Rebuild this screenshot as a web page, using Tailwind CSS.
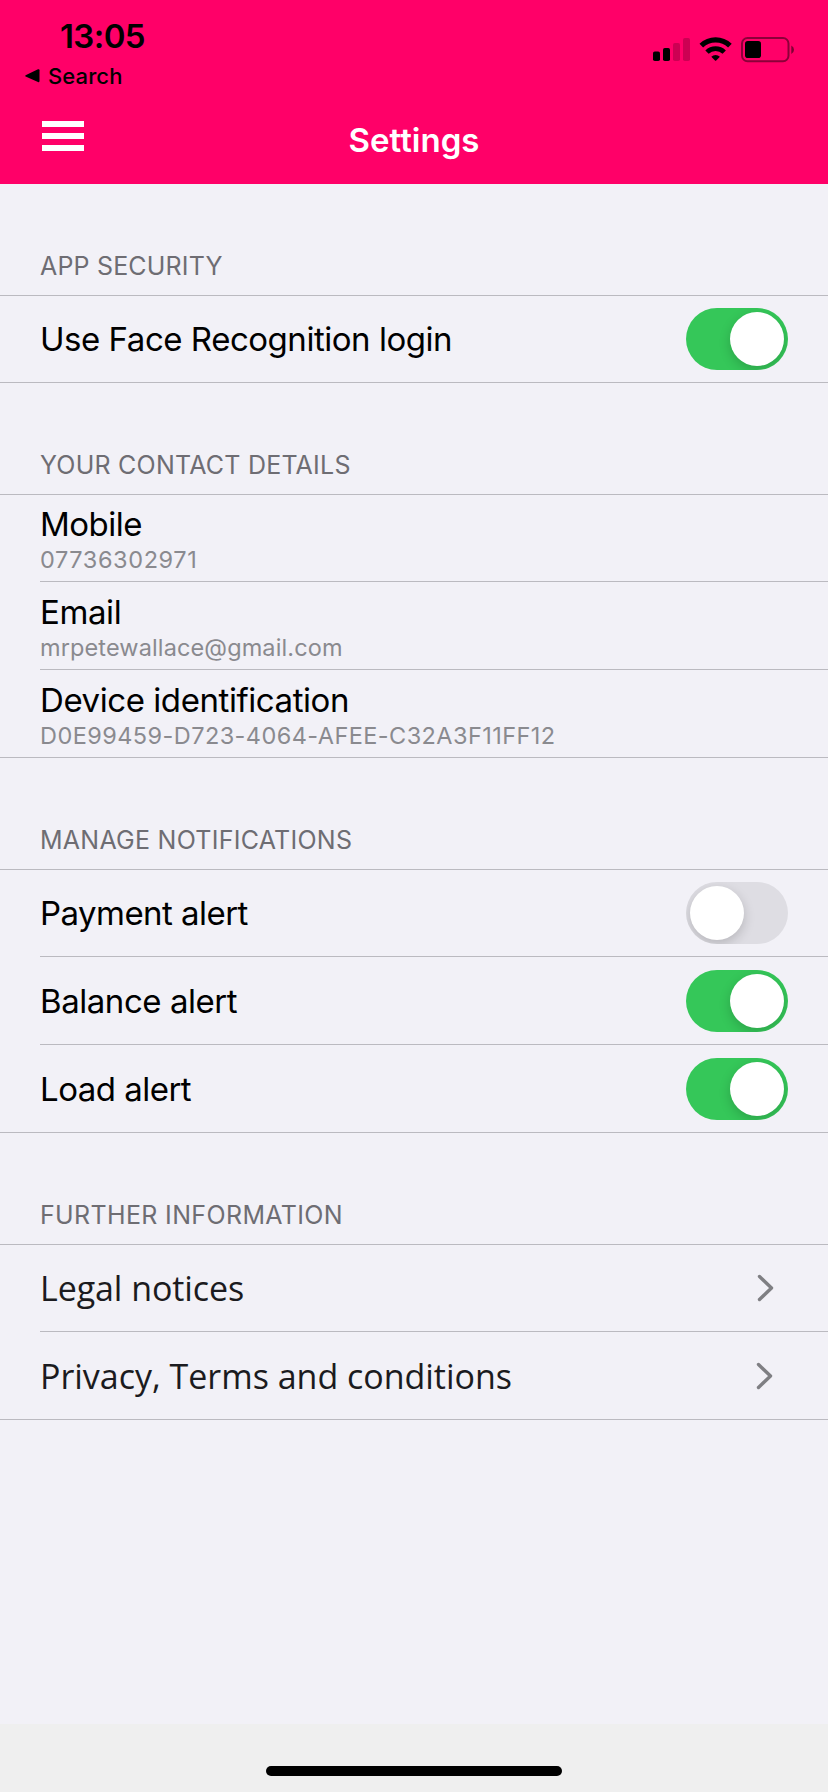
<!DOCTYPE html>
<html lang="en">
<head>
<meta charset="utf-8">
<title>Settings</title>
<script src="https://cdn.jsdelivr.net/npm/@tailwindcss/browser@4"></script>
</head>
<body class="flex h-[1792px] w-[828px] flex-col overflow-hidden bg-[#f2f1f7] font-['Inter',sans-serif] text-black">

<header class="h-[184px] shrink-0 bg-[#ff0068]">
  <div class="flex h-[92px] justify-between">
    <div class="flex flex-col pt-[16px]">
      <div class="pl-[60px] text-[33px] leading-[40px] font-semibold tracking-[-0.6px]">13:05</div>
      <div class="mt-[7px] flex items-center pl-[24px]">
        <svg class="h-[16px] w-[16px]" viewBox="0 0 16 16"><path d="M1.600 7.200 14 1.300Q15.500 .8 15.500 2.300V13.100Q15.500 14.600 14 14L1.600 8.600Q.6 7.900 1.600 7.200Z"/></svg>
        <span class="pl-[8px] text-[22px] leading-[26px] font-medium tracking-[0.1px]">Search</span>
      </div>
    </div>
    <svg class="mt-[30px] mr-[28px] h-[40px] w-[150px]" viewBox="650 30 150 40">
      <rect x="653" y="51.500" width="7" height="9.500" rx="1.800"/>
      <rect x="663" y="48" width="7" height="13" rx="1.800"/>
      <rect x="673" y="43" width="7" height="18" rx="1.800" fill-opacity=".2"/>
      <rect x="683" y="38" width="7" height="23" rx="1.800" fill-opacity=".2"/>
      <g fill="none" stroke="#000" stroke-width="5.200">
        <path d="M701.300 45.600A20.500 20.500 0 0 1 729.900 45.600"/>
        <path d="M707 52.100A12.300 12.300 0 0 1 724.200 52.100" stroke-width="4.800"/>
      </g>
      <path d="M711.300 56.700A6.300 6.300 0 0 1 719.900 56.700L716.200 60.500Q715.600 61.100 715 60.500Z"/>
      <rect x="742" y="38" width="46.500" height="23.200" rx="5.500" fill="none" stroke="#000" stroke-opacity=".45" stroke-width="2"/>
      <rect x="745" y="41" width="16" height="17" rx="2.800"/>
      <path d="M791.300 45.500Q794 46.700 794 49.700T791.300 54Z" fill-opacity=".5"/>
    </svg>
  </div>
  <div class="grid grid-cols-3">
    <div class="flex flex-col gap-[6px] pt-[29px] pl-[42px]">
      <div class="h-[6px] w-[42px] bg-white"></div>
      <div class="h-[6px] w-[42px] bg-white"></div>
      <div class="h-[6px] w-[42px] bg-white"></div>
    </div>
    <h1 class="pt-[28px] text-center text-[33px] leading-[40px] font-semibold text-white">Settings</h1>
  </div>
</header>

<main class="grow text-[33px] leading-[40px]">
  <section>
    <h2 class="flex h-[112px] items-end border-b border-[#bbbac0] pb-[14px] pl-[40px] text-[25px] leading-[30px] tracking-[0.18px] text-[#6e6d73]">APP SECURITY</h2>
    <div class="flex h-[87px] items-center justify-between border-b border-[#bbbac0] pr-[40px] pl-[40px]">
      <span class="tracking-[-0.47px]">Use Face Recognition login</span>
      <div class="flex h-[62px] w-[102px] justify-end overflow-hidden rounded-full bg-[#35c759] p-[4px]"><div class="size-[54px] rounded-full bg-white shadow-[0_4px_12px_rgba(0,0,0,0.18)]"></div></div>
    </div>
  </section>

  <section>
    <h2 class="flex h-[112px] items-end border-b border-[#bbbac0] pb-[14px] pl-[40px] text-[25px] leading-[30px] tracking-[0.22px] text-[#6e6d73]">YOUR CONTACT DETAILS</h2>
    <div class="border-b border-[#bbbac0] pl-[40px]">
      <div class="h-[87px] border-b border-[#bbbac0] pt-[9px]">
        <div class="tracking-[-0.5px]">Mobile</div>
        <div class="mt-px text-[23.5px] leading-[29px] tracking-[0.6px] text-[#8a8a8f]">07736302971</div>
      </div>
      <div class="h-[88px] border-b border-[#bbbac0] pt-[10px]">
        <div class="tracking-[-0.4px]">Email</div>
        <div class="mt-px text-[23.5px] leading-[29px] tracking-[0.12px] text-[#8a8a8f]">mrpetewallace@gmail.com</div>
      </div>
      <div class="h-[87px] pt-[10px]">
        <div class="tracking-[-0.43px]">Device identification</div>
        <div class="mt-px text-[23.5px] leading-[29px] tracking-[0.43px] text-[#8a8a8f]">D0E99459-D723-4064-AFEE-C32A3F11FF12</div>
      </div>
    </div>
  </section>

  <section>
    <h2 class="flex h-[112px] items-end border-b border-[#bbbac0] pb-[14px] pl-[40px] text-[25px] leading-[30px] tracking-[0.26px] text-[#6e6d73]">MANAGE NOTIFICATIONS</h2>
    <div class="border-b border-[#bbbac0] pl-[40px]">
      <div class="flex h-[87px] items-center justify-between border-b border-[#bbbac0] pr-[40px]">
        <span class="tracking-[-0.54px]">Payment alert</span>
        <div class="flex h-[62px] w-[102px] justify-start overflow-hidden rounded-full bg-[#dedde3] p-[4px]"><div class="size-[54px] rounded-full bg-white shadow-[0_4px_12px_rgba(0,0,0,0.18)]"></div></div>
      </div>
      <div class="flex h-[88px] items-center justify-between border-b border-[#bbbac0] pt-px pr-[40px]">
        <span class="tracking-[-0.45px]">Balance alert</span>
        <div class="flex h-[62px] w-[102px] justify-end overflow-hidden rounded-full bg-[#35c759] p-[4px]"><div class="size-[54px] rounded-full bg-white shadow-[0_4px_12px_rgba(0,0,0,0.18)]"></div></div>
      </div>
      <div class="flex h-[87px] items-center justify-between pt-px pr-[40px]">
        <span class="tracking-[-0.52px]">Load alert</span>
        <div class="flex h-[62px] w-[102px] justify-end overflow-hidden rounded-full bg-[#35c759] p-[4px]"><div class="size-[54px] rounded-full bg-white shadow-[0_4px_12px_rgba(0,0,0,0.18)]"></div></div>
      </div>
    </div>
  </section>

  <section>
    <h2 class="flex h-[112px] items-end border-b border-[#bbbac0] pb-[14px] pl-[40px] text-[25px] leading-[30px] tracking-[0.35px] text-[#6e6d73]">FURTHER INFORMATION</h2>
    <div class="border-b border-[#bbbac0] pl-[40px] font-['Open_Sans',sans-serif] text-[34px] text-[#1b1b20]">
      <div class="flex h-[87px] items-center justify-between border-b border-[#bbbac0] pr-[53px]">
        <span class="tracking-[-0.08px]">Legal notices</span>
        <svg class="h-[30px] w-[18px]" viewBox="0 0 18 30" fill="none" stroke="#7f7f83" stroke-width="3.400" stroke-linecap="round" stroke-linejoin="round"><path d="M2.500 3.500 14.500 15 2.500 26.500"/></svg>
      </div>
      <div class="flex h-[87px] items-center justify-between pt-px pr-[54px]">
        <span class="tracking-[-0.02px]">Privacy, Terms and conditions</span>
        <svg class="h-[30px] w-[18px]" viewBox="0 0 18 30" fill="none" stroke="#7f7f83" stroke-width="3.400" stroke-linecap="round" stroke-linejoin="round"><path d="M2.500 3.500 14.500 15 2.500 26.500"/></svg>
      </div>
    </div>
  </section>
</main>

<footer class="flex h-[68px] shrink-0 items-end justify-center bg-[#efefef] pb-[16px]">
  <div class="h-[10px] w-[296px] rounded-full bg-black"></div>
</footer>
</body>
</html>
